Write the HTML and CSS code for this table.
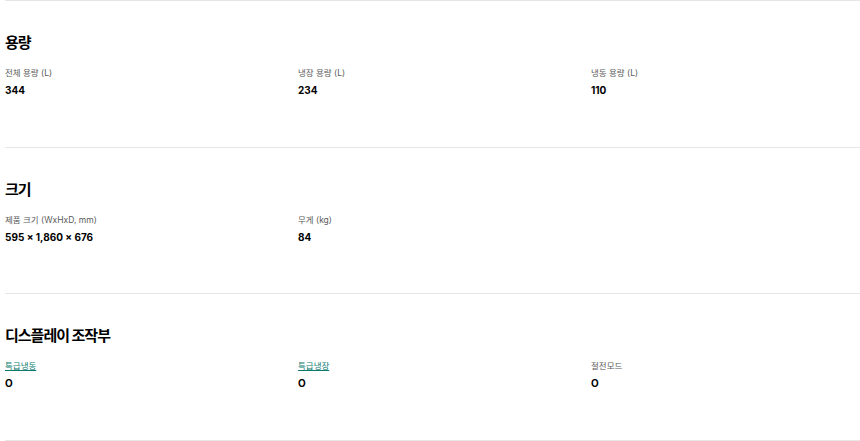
FILE: index.html
```html
<!DOCTYPE html>
<html lang="ko">
<head>
<meta charset="utf-8">
<link rel="stylesheet" href="styles.css">
</head>
<body>
<div class="specs">
  <section class="spec">
    <h3 class="spec-title">용량</h3>
    <div class="spec-grid">
      <div class="item"><div class="label">전체 용량 (L)</div><div class="value">344</div></div>
      <div class="item"><div class="label">냉장 용량 (L)</div><div class="value">234</div></div>
      <div class="item"><div class="label">냉동 용량 (L)</div><div class="value">110</div></div>
    </div>
  </section>
  <section class="spec">
    <h3 class="spec-title">크기</h3>
    <div class="spec-grid">
      <div class="item"><div class="label">제품 크기 (WxHxD, mm)</div><div class="value">595 × 1,860 × 676</div></div>
      <div class="item"><div class="label">무게 (kg)</div><div class="value">84</div></div>
    </div>
  </section>
  <section class="spec">
    <h3 class="spec-title">디스플레이 조작부</h3>
    <div class="spec-grid">
      <div class="item"><a class="label link" href="#">특급냉동</a><div class="value">O</div></div>
      <div class="item"><a class="label link" href="#">특급냉장</a><div class="value">O</div></div>
      <div class="item"><div class="label">절전모드</div><div class="value">O</div></div>
    </div>
  </section>
  <div class="end-rule"></div>
</div>
</body>
</html>
```
FILE: styles.css
```css
html, body {
  margin: 0;
  padding: 0;
  background: #fff;
}
body {
  font-family: Inter, "Noto Sans CJK KR", sans-serif;
  color: #000;
}
.specs {
  padding-left: 5px;
}
.spec {
  border-top: 1px solid #e6e6e6;
  height: 146.67px;
  box-sizing: border-box;
  padding-top: 32px;
}
.spec-title {
  margin: 0;
  font-size: 15px;
  line-height: 20px;
  font-weight: 700;
  letter-spacing: -1px;
}
.spec-grid {
  display: grid;
  grid-template-columns: 293px 293px 1fr;
  margin-top: 14px;
}
.item {
  display: flex;
  flex-direction: column;
  align-items: flex-start;
}
.label {
  font-size: 8.5px;
  line-height: 12px;
  color: #5a5a5a;
}
.link {
  color: #0a7a70;
  text-decoration: underline;
}
.value {
  margin-top: 4px;
  font-size: 10px;
  line-height: 14px;
  font-weight: 700;
}
.end-rule {
  border-top: 1px solid #e6e6e6;
}
```
